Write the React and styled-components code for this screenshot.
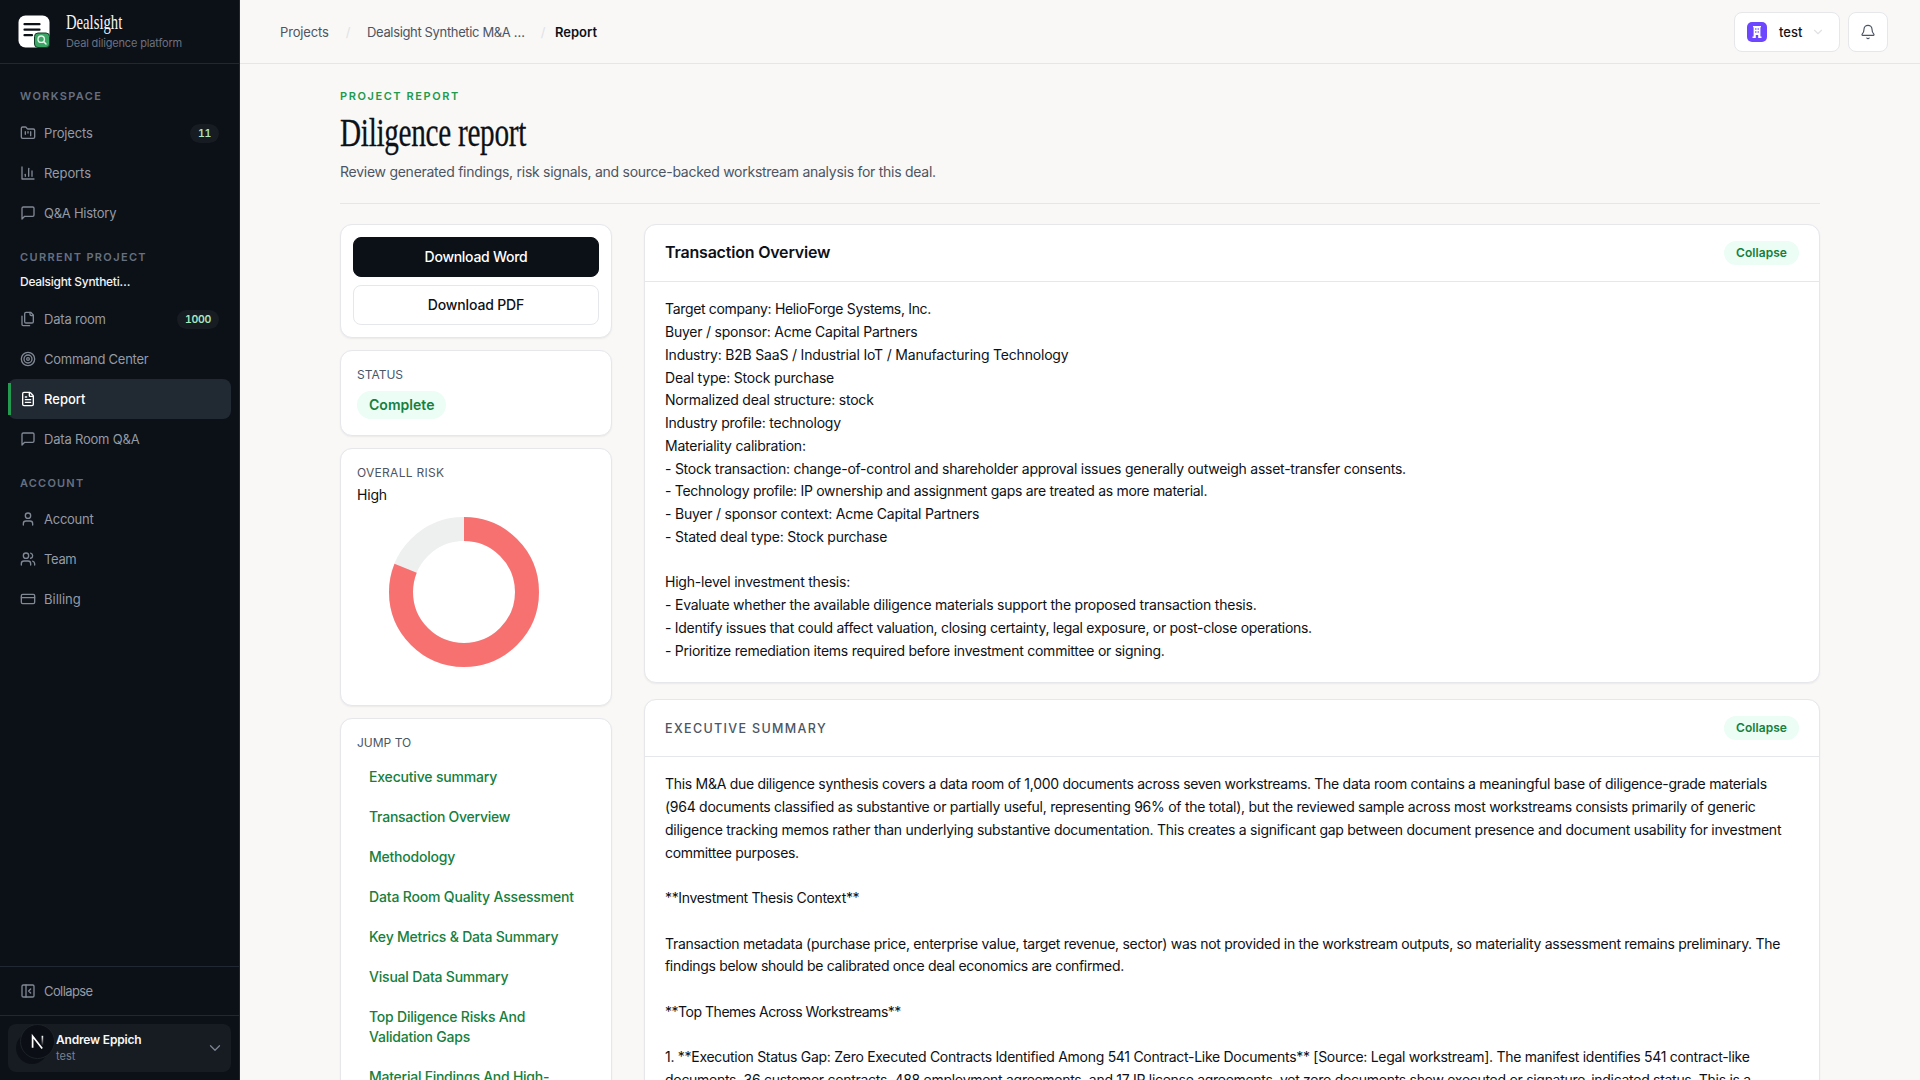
import React from 'react';
import styled, { createGlobalStyle } from 'styled-components';
import {
  Bell,
  ChevronDown,
  CreditCard,
  FileText,
  FolderKanban,
  PanelLeftClose,
  Target,
  User,
  Users,
} from 'lucide-react';

const GlobalStyle = createGlobalStyle`
  * {
    box-sizing: border-box;
  }
  body {
    margin: 0;
    overflow: hidden;
    background: #f9f8f7;
    color: #0d1117;
    font-family: Inter, "Liberation Sans", sans-serif;
    font-size: 14px;
    -webkit-font-smoothing: antialiased;
  }
  button {
    font-family: inherit;
    cursor: pointer;
  }
`;

const Shell = styled.div`
  display: flex;
  height: 100vh;
  overflow: hidden;
`;

/* ---------- sidebar ---------- */

const Sidebar = styled.aside`
  display: flex;
  flex-direction: column;
  width: 240px;
  flex-shrink: 0;
  background: #0c1017;
  border-right: 1px solid #222831;
`;

const Brand = styled.div`
  display: flex;
  align-items: center;
  gap: 16px;
  height: 64px;
  padding: 0 18px;
  border-bottom: 1px solid #222831;
`;

const BrandText = styled.div`
  display: flex;
  flex-direction: column;
`;

const BrandName = styled.span`
  width: max-content;
  font-family: "Liberation Serif", serif;
  font-size: 22px;
  line-height: 22px;
  color: #f6f7f8;
  transform: scaleX(0.667);
  transform-origin: left;
`;

const BrandTagline = styled.span`
  padding-top: 1px;
  font-size: 11px;
  line-height: 18px;
  letter-spacing: -0.16px;
  color: #6b7280;
  white-space: nowrap;
`;

const Nav = styled.nav`
  flex: 1;
  padding: 24px 8px 0;
`;

const NavHeading = styled.div`
  padding: 0 12px;
  margin-top: ${props => props.$top || 0}px;
  margin-bottom: ${props => props.$bottom}px;
  font-size: 11px;
  font-weight: 600;
  line-height: 16px;
  letter-spacing: ${props => props.$track || 1.35}px;
  color: #667080;
`;

const ProjectName = styled.div`
  padding: 0 12px;
  margin-bottom: 9px;
  font-size: 12px;
  font-weight: 500;
  line-height: 16px;
  letter-spacing: -0.28px;
  color: #f1f3f5;
`;

const NavItem = styled.a`
  position: relative;
  display: flex;
  align-items: center;
  gap: 8px;
  height: 40px;
  padding: 0 12px;
  border-radius: 8px;
  font-size: 13px;
  font-weight: ${props => (props.$active ? 500 : 400)};
  letter-spacing: ${props => props.$track || 0}px;
  color: ${props => (props.$active ? '#ffffff' : '#949ba5')};
  background: ${props => (props.$active ? '#212932' : 'transparent')};

  svg {
    flex-shrink: 0;
    color: ${props => (props.$active ? '#ffffff' : '#808894')};
  }

  &::before {
    content: '';
    display: ${props => (props.$active ? 'block' : 'none')};
    position: absolute;
    left: 0;
    top: 4px;
    bottom: 4px;
    width: 3px;
    background: #239a50;
  }
`;

const NavBadge = styled.span`
  min-width: 28px;
  margin-left: auto;
  padding: 0 8px;
  border-radius: 10px;
  background: #171c22;
  color: #a9e8c0;
  font-size: 10.5px;
  font-weight: 600;
  font-variant-numeric: tabular-nums;
  line-height: 19px;
  letter-spacing: -0.3px;
  text-align: center;
`;

const CollapseRow = styled.div`
  padding: 4px 8px;
  border-top: 1px solid #222831;
`;

const UserArea = styled.div`
  padding: 8px;
  border-top: 1px solid #222831;
`;

const UserCard = styled.div`
  position: relative;
  display: flex;
  align-items: center;
  gap: 8px;
  height: 48px;
  padding: 0 7px 0 8px;
  border-radius: 8px;
  background: #171b22;
  color: #7c8490;
`;

const Avatar = styled.div`
  width: 32px;
  height: 32px;
  border-radius: 50%;
  background: #0c1016;
`;

const DevBadge = styled.div`
  position: absolute;
  left: 12px;
  top: 0;
  display: flex;
  width: 35px;
  height: 35px;
  border: 1px solid #1d2229;
  border-radius: 50%;
  background: #0b0e14;
`;

const UserText = styled.div`
  flex: 1;
  display: flex;
  flex-direction: column;
  font-size: 11px;
  line-height: 16px;
  color: #7a828d;

  strong {
    font-size: 12px;
    font-weight: 600;
    letter-spacing: -0.18px;
    color: #f6f7f8;
  }
`;

/* ---------- top bar ---------- */

const Main = styled.div`
  flex: 1;
  display: flex;
  flex-direction: column;
  min-width: 0;
`;

const TopBar = styled.header`
  display: flex;
  align-items: center;
  justify-content: space-between;
  height: 64px;
  flex-shrink: 0;
  padding: 0 32px 0 40px;
  border-bottom: 1px solid #e6e6e6;
`;

const Breadcrumbs = styled.div`
  display: flex;
  align-items: center;
  font-size: 13px;
  color: #4b5563;
`;

const Crumb = styled.span`
  width: ${props => props.$width}px;
  letter-spacing: ${props => props.$track || 0}px;
  white-space: nowrap;
`;

const Separator = styled.span`
  width: ${props => props.$width}px;
  text-align: center;
  color: #e0e2e5;
`;

const CurrentCrumb = styled.span`
  margin-left: 6px;
  font-size: 13px;
  font-weight: 600;
  color: #0d1117;
`;

const TopActions = styled.div`
  display: flex;
  gap: 8px;
`;

const OrgButton = styled.button`
  display: flex;
  align-items: center;
  width: 106px;
  height: 40px;
  padding: 0 12px;
  border: 1px solid #e5e7eb;
  border-radius: 8px;
  background: #ffffff;
  font-size: 13px;
  font-weight: 500;
  color: #131316;

  > svg {
    margin-left: 9px;
    color: #e0e2e5;
  }
`;

const OrgLogo = styled.span`
  display: flex;
  align-items: center;
  justify-content: center;
  width: 20px;
  height: 20px;
  margin-right: 12px;
  border-radius: 5px;
  background: #6c47ff;
`;

const IconButton = styled.button`
  display: flex;
  align-items: center;
  justify-content: center;
  width: 40px;
  height: 40px;
  padding: 0;
  border: 1px solid #e5e7eb;
  border-radius: 8px;
  background: #ffffff;
  color: #4b5563;
`;

/* ---------- page ---------- */

const Page = styled.main`
  flex: 1;
  min-height: 0;
  overflow: hidden;
  padding: 24px 100px 0;
`;

const PageHeader = styled.div`
  height: 116px;
  border-bottom: 1px solid #e6e6e6;
  margin-bottom: 20px;
`;

const Eyebrow = styled.div`
  font-size: 11px;
  font-weight: 600;
  line-height: 16px;
  letter-spacing: 1.58px;
  color: #219a4e;
`;

const Title = styled.h1`
  width: max-content;
  margin: 7px 0 0;
  font-family: "Liberation Serif", serif;
  font-size: 39.5px;
  font-weight: 400;
  line-height: 44px;
  letter-spacing: -0.4px;
  -webkit-text-stroke: 0.3px #0d1117;
  transform: scaleX(0.74);
  transform-origin: left;
`;

const Subtitle = styled.p`
  margin: 7px 0 0;
  font-size: 14px;
  line-height: 20px;
  letter-spacing: -0.265px;
  color: #4b5563;
`;

const Columns = styled.div`
  display: grid;
  grid-template-columns: 272px minmax(0, 1fr);
  gap: 32px;
  align-items: start;
`;

const Stack = styled.div`
  display: flex;
  flex-direction: column;
  gap: ${props => props.$gap}px;
`;

const Card = styled.section`
  border: 1px solid #e5e7eb;
  border-radius: 12px;
  background: #ffffff;
  box-shadow: 0 1px 2px rgba(13, 17, 23, 0.06);
`;

const ActionCard = styled(Card)`
  display: flex;
  flex-direction: column;
  gap: 8px;
  padding: 12px;
  height: 114px;
`;

const DownloadButton = styled.button`
  height: 40px;
  padding: 0 0 2px;
  border: 1px solid ${props => (props.$primary ? '#0c1017' : '#e5e7eb')};
  border-radius: 8px;
  background: ${props => (props.$primary ? '#0c1017' : '#ffffff')};
  color: ${props => (props.$primary ? '#ffffff' : '#0d1117')};
  font-size: 14px;
  font-weight: 500;
  letter-spacing: ${props => (props.$primary ? -0.28 : -0.15)}px;
`;

const InfoCard = styled(Card)`
  height: ${props => props.$height}px;
  padding: 16px;
`;

const CardLabel = styled.div`
  font-size: 12px;
  line-height: 16px;
  letter-spacing: ${props => props.$track || 0}px;
  color: #4b5563;
`;

const StatusPill = styled.span`
  display: inline-block;
  margin-top: 8px;
  padding: 0 12px;
  border-radius: 14px;
  background: #ebfdf5;
  color: #15803d;
  font-size: 14px;
  font-weight: 600;
  line-height: 28px;
  letter-spacing: 0.03px;
`;

const RiskLevel = styled.div`
  margin-top: 4px;
  font-size: 14px;
  line-height: 20px;
  letter-spacing: -0.2px;
`;

const DonutSvg = styled.svg`
  display: block;
  margin: 12px 0 0 32px;
`;

const JumpList = styled.div`
  display: flex;
  flex-direction: column;
  margin-top: 6px;
`;

const JumpLink = styled.a`
  padding: 10px 12px;
  font-size: 14px;
  font-weight: 500;
  line-height: 20px;
  letter-spacing: ${props => props.$track || -0.2}px;
  color: #15803d;
  white-space: pre-line;
`;

const SectionHeader = styled.div`
  display: flex;
  align-items: center;
  justify-content: space-between;
  height: 57px;
  padding: 0 20px;
  border-bottom: 1px solid #e5e7eb;
`;

const SectionTitle = styled.h2`
  margin: 0;
  padding-bottom: 2px;
  font-size: 16px;
  font-weight: 600;
  letter-spacing: -0.2px;
`;

const SectionOverline = styled.h2`
  margin: 0;
  font-size: 12.5px;
  font-weight: 500;
  letter-spacing: 1.35px;
  color: #4b5563;
`;

const CollapsePill = styled.button`
  height: 24px;
  padding: 0 12px 1px;
  border: 0;
  border-radius: 12px;
  background: #ebfdf5;
  color: #15803d;
  font-size: 12px;
  font-weight: 600;
  letter-spacing: 0.05px;
`;

const SectionBody = styled.div`
  padding: 16.25px 20px 19.75px;
`;

const Line = styled.div`
  height: 22.75px;
  font-size: 14px;
  line-height: 22.75px;
  letter-spacing: ${props => props.$track || 0}px;
  white-space: nowrap;
`;

/* ---------- icons ---------- */

const Glyph = ({ children }) => (
  <svg
    width="16"
    height="16"
    viewBox="0 0 24 24"
    fill="none"
    stroke="currentColor"
    strokeWidth="2"
    strokeLinecap="round"
    strokeLinejoin="round"
  >
    {children}
  </svg>
);

const BarsIcon = () => (
  <Glyph>
    <path d="M3 3v18h18" />
    <path d="M18 17V9" />
    <path d="M13 17V5" />
    <path d="M8 17v-3" />
  </Glyph>
);

const ChatIcon = () => (
  <Glyph>
    <path d="M21 15a2 2 0 0 1-2 2H7l-4 4V5a2 2 0 0 1 2-2h14a2 2 0 0 1 2 2z" />
  </Glyph>
);

const FilesIcon = () => (
  <Glyph>
    <path d="M20 7h-3a2 2 0 0 1-2-2V2" />
    <path d="M9 18a2 2 0 0 1-2-2V4a2 2 0 0 1 2-2h7l4 4v10a2 2 0 0 1-2 2Z" />
    <path d="M3 7.6v12.8A1.6 1.6 0 0 0 4.6 22h9.8" />
  </Glyph>
);

const LogoMark = () => (
  <svg width="32" height="33" viewBox="0 0 32 33">
    <rect x="0.5" y="0.5" width="31" height="32" rx="7" fill="#ffffff" />
    <path
      d="M6.5 9.2h15M6.5 14.7h15M6.5 20.2h7.5"
      stroke="#0c1017"
      strokeWidth="2.2"
      strokeLinecap="round"
    />
    <rect x="16.5" y="18" width="15" height="14.5" rx="3.5" fill="#3aa565" stroke="#123d27" strokeWidth="1" />
    <circle cx="23.2" cy="24.2" r="3.2" fill="none" stroke="#dff5e7" strokeWidth="1.4" />
    <path d="M25.6 26.6l2.4 2.4" stroke="#dff5e7" strokeWidth="1.5" strokeLinecap="round" />
  </svg>
);

const BuildingIcon = () => (
  <svg width="12" height="12" viewBox="0 0 12 12">
    <path
      fill="#ffffff"
      fillRule="evenodd"
      d="M2 0h8v1.2h-.6v9.3h1.1V12H7.2V9H4.8v3H1.5v-1.5h1.1V1.2H2zM4.2 2.3v1.4h1.2V2.3zM6.6 2.3v1.4h1.2V2.3zM4.2 5.3v1.4h1.2V5.3zM6.6 5.3v1.4h1.2V5.3z"
    />
  </svg>
);

const DevMark = () => (
  <svg width="33" height="33" viewBox="0 0 33 33">
    <defs>
      <linearGradient id="stem" x1="0" y1="0" x2="0" y2="1">
        <stop offset="0" stopColor="#ffffff" />
        <stop offset="1" stopColor="#ffffff" stopOpacity="0" />
      </linearGradient>
    </defs>
    <path d="M11.6 22.8V11.2l9.6 12.4" fill="none" stroke="#ffffff" strokeWidth="1.7" />
    <rect x="20.6" y="10.8" width="1.6" height="10" fill="url(#stem)" />
  </svg>
);

const RADIUS = 63;
const RING = 2 * Math.PI * RADIUS;

const Donut = ({ value }) => (
  <DonutSvg width="150" height="150" viewBox="0 0 150 150">
    <circle cx="75" cy="75" r={RADIUS} fill="none" stroke="#eeefef" strokeWidth="24" />
    <circle
      cx="75"
      cy="75"
      r={RADIUS}
      fill="none"
      stroke="#f87171"
      strokeWidth="24"
      strokeDasharray={`${RING * value} ${RING}`}
      transform="rotate(-90 75 75)"
    />
  </DonutSvg>
);

/* ---------- data ---------- */

const workspaceItems = [
  { label: 'Projects', icon: <FolderKanban size={16} />, badge: '11', track: -0.15 },
  { label: 'Reports', icon: <BarsIcon />, track: -0.1 },
  { label: 'Q&A History', icon: <ChatIcon />, track: -0.25 },
];

const projectItems = [
  { label: 'Data room', icon: <FilesIcon />, badge: '1000', track: -0.2 },
  { label: 'Command Center', icon: <Target size={16} />, track: -0.26 },
  { label: 'Report', icon: <FileText size={16} />, active: true },
  { label: 'Data Room Q&A', icon: <ChatIcon />, track: -0.2 },
];

const accountItems = [
  { label: 'Account', icon: <User size={16} />, track: -0.25 },
  { label: 'Team', icon: <Users size={16} />, track: -0.35 },
  { label: 'Billing', icon: <CreditCard size={16} /> },
];

const jumpLinks = [
  { label: 'Executive summary', track: -0.18 },
  { label: 'Transaction Overview', track: -0.25 },
  { label: 'Methodology', track: -0.22 },
  { label: 'Data Room Quality Assessment', track: -0.17 },
  { label: 'Key Metrics & Data Summary' },
  { label: 'Visual Data Summary' },
  { label: 'Top Diligence Risks And\nValidation Gaps', track: -0.22 },
  { label: 'Material Findings And High-\nPriority Issues', track: -0.25 },
];

// [text, letter spacing]
const overviewLines = [
  ['Target company: HelioForge Systems, Inc.', -0.337],
  ['Buyer / sponsor: Acme Capital Partners', -0.225],
  ['Industry: B2B SaaS / Industrial IoT / Manufacturing Technology', -0.19],
  ['Deal type: Stock purchase', -0.2],
  ['Normalized deal structure: stock', -0.2],
  ['Industry profile: technology', -0.22],
  ['Materiality calibration:', -0.24],
  ['- Stock transaction: change-of-control and shareholder approval issues generally outweigh asset-transfer consents.', -0.245],
  ['- Technology profile: IP ownership and assignment gaps are treated as more material.', -0.284],
  ['- Buyer / sponsor context: Acme Capital Partners', -0.22],
  ['- Stated deal type: Stock purchase', -0.215],
  [''],
  ['High-level investment thesis:', -0.21],
  ['- Evaluate whether the available diligence materials support the proposed transaction thesis.', -0.22],
  ['- Identify issues that could affect valuation, closing certainty, legal exposure, or post-close operations.', -0.289],
  ['- Prioritize remediation items required before investment committee or signing.', -0.259],
];

const summaryLines = [
  ['This M&A due diligence synthesis covers a data room of 1,000 documents across seven workstreams. The data room contains a meaningful base of diligence-grade materials', -0.293],
  ['(964 documents classified as substantive or partially useful, representing 96% of the total), but the reviewed sample across most workstreams consists primarily of generic', -0.27],
  ['diligence tracking memos rather than underlying substantive documentation. This creates a significant gap between document presence and document usability for investment', -0.26],
  ['committee purposes.', -0.3],
  [''],
  ['**Investment Thesis Context**', -0.338],
  [''],
  ['Transaction metadata (purchase price, enterprise value, target revenue, sector) was not provided in the workstream outputs, so materiality assessment remains preliminary. The', -0.294],
  ['findings below should be calibrated once deal economics are confirmed.', -0.315],
  [''],
  ['**Top Themes Across Workstreams**', -0.47],
  [''],
  ['1. **Execution Status Gap: Zero Executed Contracts Identified Among 541 Contract-Like Documents** [Source: Legal workstream]. The manifest identifies 541 contract-like', -0.286],
  ['documents, 36 customer contracts, 488 employment agreements, and 17 IP license agreements, yet zero documents show executed or signature-indicated status. This is a', -0.29],
];

function NavGroup({ items }) {
  return items.map(item => (
    <NavItem key={item.label} $active={item.active} $track={item.track}>
      {item.icon}
      {item.label}
      {item.badge && <NavBadge>{item.badge}</NavBadge>}
    </NavItem>
  ));
}

function Lines({ lines }) {
  return lines.map(([text, track], i) => (
    <Line key={i} $track={track}>{text}</Line>
  ));
}

function App() {
  return (
    <Shell>
      <GlobalStyle />
      <Sidebar>
        <Brand>
          <LogoMark />
          <BrandText>
            <BrandName>Dealsight</BrandName>
            <BrandTagline>Deal diligence platform</BrandTagline>
          </BrandText>
        </Brand>
        <Nav>
          <NavHeading $bottom={9}>WORKSPACE</NavHeading>
          <NavGroup items={workspaceItems} />
          <NavHeading $top={16} $bottom={9}>CURRENT PROJECT</NavHeading>
          <ProjectName>Dealsight Syntheti…</ProjectName>
          <NavGroup items={projectItems} />
          <NavHeading $top={16} $bottom={8} $track={1.2}>ACCOUNT</NavHeading>
          <NavGroup items={accountItems} />
        </Nav>
        <CollapseRow>
          <NavItem $track={-0.6}>
            <PanelLeftClose size={16} />
            Collapse
          </NavItem>
        </CollapseRow>
        <UserArea>
          <UserCard>
            <Avatar />
            <UserText>
              <strong>Andrew Eppich</strong>
              test
            </UserText>
            <ChevronDown size={18} strokeWidth={1.75} />
            <DevBadge>
              <DevMark />
            </DevBadge>
          </UserCard>
        </UserArea>
      </Sidebar>

      <Main>
        <TopBar>
          <Breadcrumbs>
            <Crumb $width={49} $track={-0.15}>Projects</Crumb>
            <Separator $width={38}>/</Separator>
            <Crumb $width={170} $track={-0.35}>Dealsight Synthetic M&A …</Crumb>
            <Separator $width={12}>/</Separator>
            <CurrentCrumb>Report</CurrentCrumb>
          </Breadcrumbs>
          <TopActions>
            <OrgButton>
              <OrgLogo>
                <BuildingIcon />
              </OrgLogo>
              test
              <ChevronDown size={14} />
            </OrgButton>
            <IconButton>
              <Bell size={16} strokeWidth={1.75} />
            </IconButton>
          </TopActions>
        </TopBar>

        <Page>
          <PageHeader>
            <Eyebrow>PROJECT REPORT</Eyebrow>
            <Title>Diligence report</Title>
            <Subtitle>
              Review generated findings, risk signals, and source-backed workstream analysis for this deal.
            </Subtitle>
          </PageHeader>
          <Columns>
            <Stack $gap={12}>
              <ActionCard>
                <DownloadButton $primary>Download Word</DownloadButton>
                <DownloadButton>Download PDF</DownloadButton>
              </ActionCard>
              <InfoCard $height={86}>
                <CardLabel>STATUS</CardLabel>
                <StatusPill>Complete</StatusPill>
              </InfoCard>
              <InfoCard $height={258}>
                <CardLabel $track={0.28}>OVERALL RISK</CardLabel>
                <RiskLevel>High</RiskLevel>
                <Donut value={0.81} />
              </InfoCard>
              <InfoCard $height={420}>
                <CardLabel>JUMP TO</CardLabel>
                <JumpList>
                  {jumpLinks.map(link => (
                    <JumpLink key={link.label} $track={link.track}>{link.label}</JumpLink>
                  ))}
                </JumpList>
              </InfoCard>
            </Stack>
            <Stack $gap={16}>
              <Card>
                <SectionHeader>
                  <SectionTitle>Transaction Overview</SectionTitle>
                  <CollapsePill>Collapse</CollapsePill>
                </SectionHeader>
                <SectionBody>
                  <Lines lines={overviewLines} />
                </SectionBody>
              </Card>
              <Card>
                <SectionHeader>
                  <SectionOverline>EXECUTIVE SUMMARY</SectionOverline>
                  <CollapsePill>Collapse</CollapsePill>
                </SectionHeader>
                <SectionBody>
                  <Lines lines={summaryLines} />
                </SectionBody>
              </Card>
            </Stack>
          </Columns>
        </Page>
      </Main>
    </Shell>
  );
}

export default App;
